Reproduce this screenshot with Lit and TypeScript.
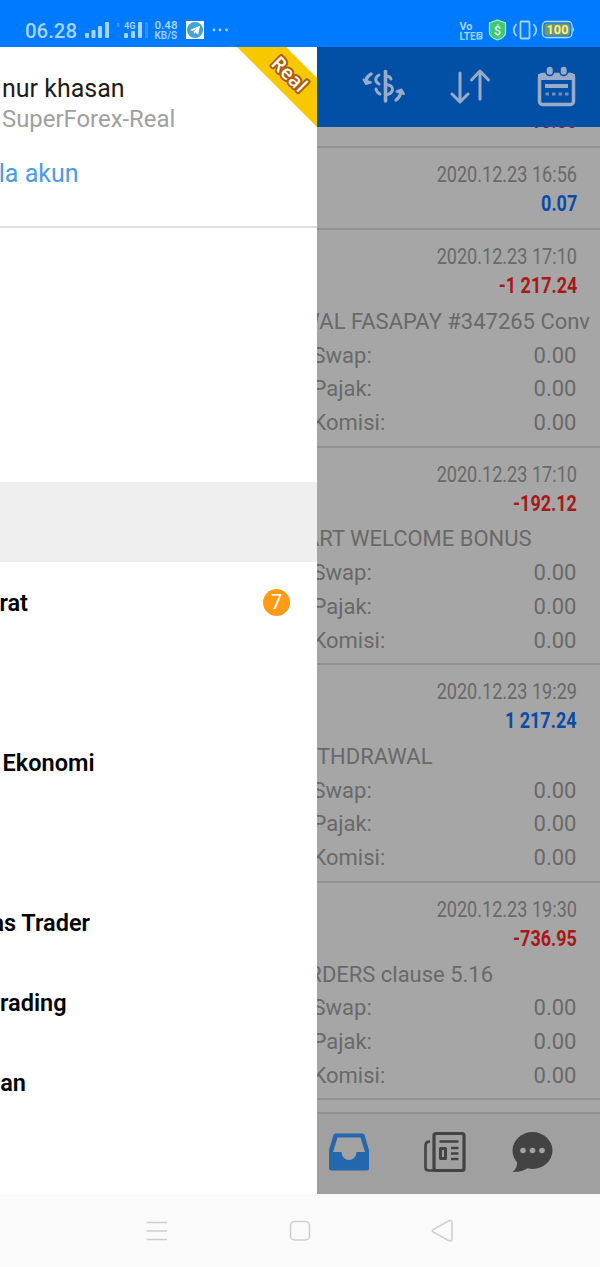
import { LitElement, html, css } from "lit";
import { customElement } from "lit/decorators.js";

const DETAILS = ["Swap:", "Pajak:", "Komisi:"];
const DEALS = [
  { date: "2020.12.23 17:10", amount: "-1 217.24", neg: true, note: "WAL FASAPAY #347265 Conv", end: 273 },
  { date: "2020.12.23 17:10", amount: "-192.12", neg: true, note: "ART WELCOME BONUS", end: 214.5 },
  { date: "2020.12.23 19:29", amount: "1 217.24", neg: false, note: "THDRAWAL", end: 115.5 },
  { date: "2020.12.23 19:30", amount: "-736.95", neg: true, note: "RDERS clause 5.16", end: 176 },
];
const MENU = [
  { label: "rat", end: 28, badge: "7" },
  { label: "", end: 0 },
  { label: "Ekonomi", end: 94.5 },
  { label: "", end: 0 },
  { label: "as Trader", end: 90 },
  { label: "rading", end: 66.5 },
  { label: "an", end: 26 },
];

@customElement("app-status-bar")
class AppStatusBar extends LitElement {
  static styles = css`
    :host { display: block; height: 47px; background: #007aff; color: #a5d5fd; font-family: Roboto, sans-serif; }
    svg { display: block; }
  `;
  render() {
    return html`<svg width="600" height="47" viewBox="0 0 600 47" fill="currentColor" font-family="Roboto, sans-serif">
      <text x="25" y="37.500" font-size="21" font-weight="500" textLength="52" lengthAdjust="spacingAndGlyphs">06.28</text>
      <rect x="85" y="33" width="4" height="5" rx="1" /><rect x="91.500" y="30" width="4" height="8" rx="1" />
      <rect x="98" y="26" width="4" height="12" rx="1" /><rect x="105" y="22" width="4" height="16" rx="1" />
      <rect x="117" y="23" width="2.500" height="4" opacity=".35" />
      <text x="124" y="28.500" font-size="9.500" font-weight="700" textLength="11.500" lengthAdjust="spacingAndGlyphs">4G</text>
      <rect x="124" y="33" width="4" height="5" rx="1" /><rect x="131" y="31" width="4" height="7" rx="1" />
      <rect x="138" y="22" width="4" height="16" rx="1" /><rect x="145" y="22" width="3" height="16" opacity=".25" />
      <text x="154.500" y="29" font-size="11" font-weight="600" textLength="23" lengthAdjust="spacingAndGlyphs">0.48</text>
      <text x="154.500" y="38.500" font-size="10.500" font-weight="600" textLength="22.500" lengthAdjust="spacingAndGlyphs">KB/S</text>
      <rect x="186" y="21" width="18" height="18" fill="#f4fbff" /><circle cx="195" cy="30" r="8" fill="#45a3ce" />
      <path d="M190 30 200 25.800 198.300 34.600 195.400 32.500 194 34 193.600 31.500 197.500 28 192.500 31Z" fill="#fff" />
      <circle cx="214" cy="30" r="1.400" /><circle cx="220" cy="30" r="1.400" /><circle cx="226.500" cy="30" r="1.400" />
      <text x="459.500" y="29.500" font-size="11" font-weight="700" textLength="13" lengthAdjust="spacingAndGlyphs">Vo</text>
      <text x="459.500" y="39.500" font-size="11" font-weight="700" textLength="16" lengthAdjust="spacingAndGlyphs">LTE</text>
      <rect x="476.500" y="32" width="6" height="7.500" rx="1" />
      <path d="M478 33.500H481V35.500H478.300V37.800H481" fill="none" stroke="#007aff" stroke-width=".8" />
      <path d="M497.500 20 505.500 23V33Q505.500 37 497.500 40Q489.500 37 489.500 33V23Z" fill="#3fc873" stroke="#a6ecc2" stroke-width="1.200" />
      <text x="497.500" y="34.500" font-size="12.500" font-weight="500" text-anchor="middle" fill="#d8ffe2">$</text>
      <rect x="520.500" y="21.500" width="9" height="17" rx="1" fill="none" stroke="currentColor" stroke-width="1.800" />
      <path d="M516.500 24Q511 30 516.500 36M533.500 24Q539 30 533.500 36" fill="none" stroke="currentColor" stroke-width="1.800" />
      <rect x="542.500" y="21.500" width="29.500" height="16" rx="4" fill="none" stroke="#b5dcf0" stroke-width="1.300" />
      <rect x="544.500" y="23.500" width="25.500" height="12" rx="2" fill="#77995d" />
      <path d="M573 27Q575.500 29.500 573 32Z" />
      <text x="546.500" y="34" font-size="12.500" font-weight="700" fill="#f5efa0" textLength="22" lengthAdjust="spacingAndGlyphs">100</text>
    </svg>`;
  }
}

@customElement("app-drawer")
class AppDrawer extends LitElement {
  static styles = css`
    :host { display: flex; flex-direction: column; position: relative; overflow: hidden; background: #fff; font-family: Roboto, sans-serif; }
    .account { height: 152px; border-bottom: 2px solid #dedede; padding: 27px 0 0 2px; white-space: nowrap; }
    .name { font-size: 25px; line-height: 30px; color: #1c1c1c; }
    .server { font-size: 23.900px; line-height: 31.500px; color: #a0a0a0; }
    .manage { font-size: 25px; line-height: 30px; color: #4a9be8; margin-top: 23.500px; width: 76.500px; display: flex; justify-content: flex-end; }
    .gap { height: 254px; }
    .active { height: 80px; background: #efefef; }
    .item { height: 80px; display: flex; align-items: center; justify-content: space-between; padding-right: 27px; }
    .label { display: flex; justify-content: flex-end; white-space: nowrap; font-size: 23.500px; font-weight: 600; color: #000; padding-top: 2px; }
    .badge { width: 27px; height: 27px; border-radius: 50%; background: #ff9b16; color: #fff; font-size: 20px; line-height: 27px; text-align: center; margin-top: 1px; }
    .ribbon { position: absolute; right: 0; top: 0; }
  `;
  render() {
    return html`
      <div class="account">
        <div class="name">nur khasan</div>
        <div class="server">SuperForex-Real</div>
        <div class="manage"><span>la akun</span></div>
      </div>
      <div class="gap"></div>
      <div class="active"></div>
      ${MENU.map((m) => html`<div class="item">
        <div class="label" style="width:${m.end}px"><span>${m.label}</span></div>
        ${m.badge ? html`<div class="badge">${m.badge}</div>` : ""}
      </div>`)}
      <svg class="ribbon" width="80" height="80" viewBox="0 0 80 80">
        <path d="M0 0H49L80 31V80Z" fill="#f7c800" />
        <text transform="translate(52.500 27) rotate(45)" text-anchor="middle" y="7" font-family="Open Sans, sans-serif" font-size="19.500" font-weight="600"
          fill="#fff" stroke="#ae5c0a" stroke-width="4" stroke-linejoin="round" paint-order="stroke" textLength="41">Real</text>
      </svg>`;
  }
}

@customElement("app-history")
class AppHistory extends LitElement {
  static styles = css`
    :host { display: flex; flex-direction: column; overflow: hidden; background: #a6a6a6; color: #696969; font-family: Roboto, sans-serif; }
    svg { display: block; flex: none; }
    .list { flex: 1; overflow: hidden; min-height: 0; }
    .clipped { height: 19.500px; overflow: hidden; display: flex; align-items: flex-start; justify-content: flex-end; padding-right: 23px; }
    .clipped .amount { margin-top: -20.500px; }
    .deal { border-top: 2px solid #919191; box-sizing: border-box; height: 217.600px; padding-top: 12.500px; }
    .short { height: 82px; }
    .right { display: flex; justify-content: flex-end; padding-right: 23px; height: 28.500px; align-items: center; white-space: nowrap; }
    .date { font-size: 22.800px; transform: scaleX(.793); transform-origin: right; }
    .amount { font-size: 22.500px; font-weight: 700; transform: scaleX(.80); transform-origin: right; line-height: 28.500px; color: #a81818; }
    .amount.pos { color: #084ba8; }
    .note { margin-top: 5px; height: 33.700px; display: flex; align-items: center; justify-content: flex-end; white-space: nowrap; font-size: 21.980px; }
    .row { height: 33.700px; display: flex; align-items: center; justify-content: space-between; padding-right: 23.500px; margin-left: -4.500px; font-size: 22px; }
    .end { border-top: 2px solid #919191; }
    .tabs { height: 80px; flex: none; border-top: 2px solid #919191; background: #a0a0a0; }
  `;
  render() {
    return html`
      <svg width="283" height="79.500" viewBox="0 0 283 79.500">
        <rect width="283" height="80" fill="#0250a6" />
        <g fill="none" stroke="#9aabc9" stroke-width="3" stroke-linecap="round" stroke-linejoin="round">
          <path d="M143 26V54M135 47 143 55 151 47M163 52V25M154.500 33 163 24 171.500 33" />
          <path d="M54 27Q49 30 49 35" stroke-width="3.500" />
          <path d="M46.500 32.500 49 37 54 35.500Z" fill="#9aabc9" stroke-width="2" />
          <path d="M62 28Q58 30 59 34Q60 36 62 37M59 42Q60 46 63 47" />
          <path d="M68.500 24.500V54" stroke-width="3.600" />
          <path d="M69 29Q73 29 74 32M69 37.500Q76 38 75.500 43Q74 47.500 69 47.500" />
          <path d="M79 53Q83.500 50 84 44" stroke-width="3.200" />
          <path d="M79.500 44.500 84.500 42.500 87 47Z" fill="#9aabc9" stroke-width="2" />
        </g>
        <rect x="222.500" y="27.500" width="34" height="30" rx="3" fill="none" stroke="#9aabc9" stroke-width="3.500" />
        <path d="M221 27H258V33H221Z" fill="#9aabc9" />
        <g fill="#9aabc9" stroke="#0250a6" stroke-width="1.500"><rect x="229" y="19" width="7.500" height="9.500" rx="3.700" /><rect x="243" y="19" width="7.500" height="9.500" rx="3.700" /></g>
        <rect x="228" y="37" width="23" height="4" fill="#9aabc9" />
        <path d="M228.500 47H252" stroke="#9aabc9" stroke-opacity=".7" stroke-width="3" stroke-dasharray="3.500 3" />
      </svg>
      <div class="list">
        <div class="clipped"><span class="amount">10.00</span></div>
        <div class="deal short">
          <div class="right"><span class="date">2020.12.23 16:56</span></div>
          <div class="right"><span class="amount pos">0.07</span></div>
        </div>
        ${DEALS.map((d) => html`<div class="deal">
          <div class="right"><span class="date">${d.date}</span></div>
          <div class="right"><span class="amount ${d.neg ? "" : "pos"}">${d.amount}</span></div>
          <div class="note" style="width:${d.end}px"><span>${d.note}</span></div>
          ${DETAILS.map((t) => html`<div class="row"><span>${t}</span><span>0.00</span></div>`)}
        </div>`)}
        <div class="end"></div>
      </div>
      <div class="tabs">
        <svg width="283" height="78" viewBox="0 0 283 78">
          <path d="M18.500 19.500H45.500Q47 19.500 47.500 21L52 36V54Q52 56.500 49.500 56.500H14.500Q12 56.500 12 54V36L16.500 21Q17 19.500 18.500 19.500Z" fill="#2567ad" />
          <path d="M20.500 23.500H43.500L48 38H39.500C39 48.500 25 48.500 24.500 38H16Z" fill="#a3a3a3" />
          <g fill="none" stroke="#434343" stroke-width="3.200" stroke-linejoin="round">
            <rect x="117" y="19.500" width="30" height="37" rx="2" />
            <path d="M113 27.500Q108.500 27.500 108.500 31.500V53.500Q108.500 56.500 112 56.500H119M122.500 27.500H141.500M134 34H141.500M134 39.500H141.500M134 45H141.500" stroke-width="2.600" />
            <rect x="123.500" y="34.500" width="5" height="10" stroke-width="3" />
          </g>
          <ellipse cx="215.500" cy="36.500" rx="20" ry="18.500" fill="#434343" />
          <path d="M200 46Q201 54 195.500 58Q207 58 212 53Z" fill="#434343" />
          <g fill="#a3a3a3"><circle cx="206" cy="36.500" r="2.800" /><circle cx="215.500" cy="36.500" r="2.800" /><circle cx="225" cy="36.500" r="2.800" /></g>
        </svg>
      </div>`;
  }
}

@customElement("app-root")
class AppRoot extends LitElement {
  static styles = css`
    :host { display: grid; grid-template-rows: 47px 1146.500px 73.500px; width: 600px; height: 1267px; overflow: hidden; }
    .body { display: grid; grid-template-columns: 317px 283px; min-height: 0; }
    .nav { background: #fafafa; }
    .nav svg { display: block; }
  `;
  render() {
    return html`
      <app-status-bar></app-status-bar>
      <div class="body"><app-drawer></app-drawer><app-history></app-history></div>
      <div class="nav">
        <svg width="600" height="73" viewBox="0 0 600 73" fill="none" stroke="#cecece" stroke-width="1.500" stroke-linejoin="round">
          <path d="M146.500 28.500H167M146.500 37H167M146.500 45.500H167" />
          <rect x="290.500" y="27.500" width="19" height="18.500" rx="4" />
          <path d="M433.500 35.300 448.500 27Q452 25.500 452 28.500V45Q452 48 448.500 46.500L433.500 38.200Q431 36.700 433.500 35.300Z" />
        </svg>
      </div>`;
  }
}
